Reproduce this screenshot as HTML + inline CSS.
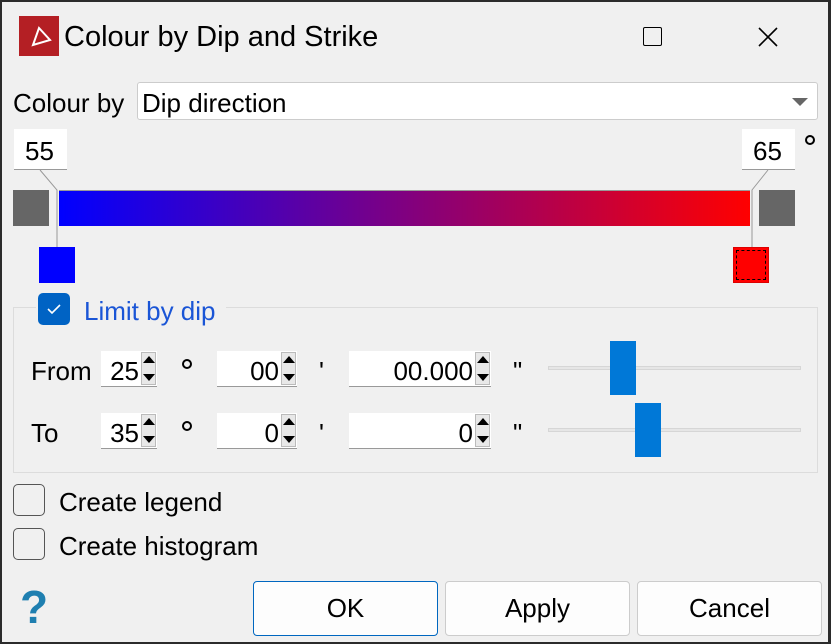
<!DOCTYPE html>
<html><head><meta charset="utf-8"><style>
*{box-sizing:border-box;margin:0;padding:0}
body{width:831px;height:644px;overflow:hidden;background:#2b2b2b;font-family:"Liberation Sans",sans-serif;color:#000}
#w{position:absolute;left:2px;top:2px;width:826px;height:640px;background:#f0f0f0}
.a{position:absolute}
.t{position:absolute;font-size:26px;line-height:1;white-space:nowrap}
.box{position:absolute;background:#fff}
.spin{position:absolute;background:#fff;border-bottom:1px solid #999;height:36px}
.spin .v{position:absolute;right:18px;top:5px;font-size:26px}
.spin .ar{position:absolute;right:1px;top:1px;width:15px;height:33px;background:#e8e8e8;border:1px solid #bbb}
.spin .ar:before{content:"";position:absolute;left:1px;top:3px;border:6px solid transparent;border-bottom:7px solid #000;border-top:0}
.spin .ar:after{content:"";position:absolute;left:1px;bottom:3px;border:6px solid transparent;border-top:7px solid #000;border-bottom:0}
.btn{position:absolute;top:579px;height:55px;width:185px;background:#fdfdfd;border:1px solid #ccc;border-radius:4px;font-size:26px;text-align:center;line-height:53px}
.cb{position:absolute;width:32px;height:32px;border:1.5px solid #555;border-radius:5px;background:#f0f0f0}
.deg{position:absolute;width:10px;height:10px;border:2px solid #000;border-radius:50%}
</style></head><body><div id="w">
<div class="a" style="left:17px;top:14px;width:40px;height:40px;background:#b41f24"></div>
<svg class="a" style="left:17px;top:14px" width="40" height="40"><path d="M14 29 L20 12 L31 24 Z" fill="none" stroke="#fff" stroke-width="2"/></svg>
<div class="t" style="left:62px;top:21px;font-size:29px">Colour by Dip and Strike</div>
<div class="a" style="left:641px;top:25px;width:19px;height:19px;border:1.5px solid #000;border-radius:2px"></div>
<svg class="a" style="left:756px;top:25px" width="20" height="20"><path d="M1 1L19 19M19 1L1 19" stroke="#000" stroke-width="1.6"/></svg>

<div class="t" style="left:11px;top:88px">Colour by</div>
<div class="box" style="left:135px;top:80px;width:681px;height:38px;border:1px solid #ccc;border-radius:3px"></div>
<div class="t" style="left:140px;top:88px">Dip direction</div>
<div class="a" style="left:790px;top:96px;border:8px solid transparent;border-top:8px solid #666;border-bottom:0"></div>

<div class="box" style="left:12px;top:127px;width:53px;height:41px;border-bottom:1px solid #999"></div>
<div class="t" style="left:23px;top:136px">55</div>
<div class="box" style="left:740px;top:127px;width:53px;height:41px;border-bottom:1px solid #999"></div>
<div class="t" style="left:751px;top:136px">65</div>
<div class="deg" style="left:803px;top:133px"></div>

<div class="a" style="left:11px;top:188px;width:36px;height:36px;background:#666"></div>
<div class="a" style="left:757px;top:188px;width:36px;height:36px;background:#666"></div>
<div class="a" style="left:57px;top:188px;width:691px;height:36px;background:linear-gradient(90deg,#0000ff,#800080 50%,#ff0000);border-top:1px solid #999"></div>
<svg class="a" style="left:0;top:0" width="826" height="260"><path d="M38 168 L55 188 L55 245 M766 168 L750 188 L750 245" fill="none" stroke="#999" stroke-width="1"/></svg>
<div class="a" style="left:37px;top:245px;width:36px;height:36px;background:#0000ff"></div>
<div class="a" style="left:731px;top:245px;width:36px;height:36px;background:#ff0000;border:1px solid #d00;outline:1px dashed #000;outline-offset:-4px"></div>

<div class="a" style="left:11px;top:305px;width:805px;height:166px;border:1px solid #dcdcdc"></div>
<div class="a" style="left:34px;top:293px;width:190px;height:30px;background:#f0f0f0"></div>
<div class="a" style="left:36px;top:291px;width:32px;height:32px;background:#0063c4;border-radius:5px"></div>
<svg class="a" style="left:36px;top:291px" width="32" height="32"><path d="M10 16 L14 20 L22 12" fill="none" stroke="#fff" stroke-width="1.6"/></svg>
<div class="t" style="left:82px;top:296px;color:#1a55d6">Limit by dip</div>

<div class="t" style="left:29px;top:356px">From</div>
<div class="spin" style="left:99px;top:349px;width:56px"><span class="v">25</span><span class="ar"></span></div>
<div class="deg" style="left:180px;top:357px"></div>
<div class="spin" style="left:215px;top:349px;width:80px"><span class="v">00</span><span class="ar"></span></div>
<div class="t" style="left:317px;top:356px">'</div>
<div class="spin" style="left:347px;top:349px;width:142px"><span class="v">00.000</span><span class="ar"></span></div>
<div class="t" style="left:511px;top:356px">"</div>
<div class="a" style="left:546px;top:364px;width:253px;height:4px;background:#e6e6e6;border:1px solid #d6d6d6"></div>
<div class="a" style="left:608px;top:339px;width:26px;height:54px;background:#0078d7"></div>

<div class="t" style="left:29px;top:418px">To</div>
<div class="spin" style="left:99px;top:411px;width:56px"><span class="v">35</span><span class="ar"></span></div>
<div class="deg" style="left:180px;top:419px"></div>
<div class="spin" style="left:215px;top:411px;width:80px"><span class="v">0</span><span class="ar"></span></div>
<div class="t" style="left:317px;top:418px">'</div>
<div class="spin" style="left:347px;top:411px;width:142px"><span class="v">0</span><span class="ar"></span></div>
<div class="t" style="left:511px;top:418px">"</div>
<div class="a" style="left:546px;top:426px;width:253px;height:4px;background:#e6e6e6;border:1px solid #d6d6d6"></div>
<div class="a" style="left:633px;top:401px;width:26px;height:54px;background:#0078d7"></div>

<div class="cb" style="left:11px;top:482px"></div>
<div class="t" style="left:57px;top:487px">Create legend</div>
<div class="cb" style="left:11px;top:526px"></div>
<div class="t" style="left:57px;top:531px">Create histogram</div>

<div class="t" style="left:18px;top:582px;font-size:46px;font-weight:bold;color:#1f7fb0">?</div>
<div class="btn" style="left:251px;border-color:#0067c0">OK</div>
<div class="btn" style="left:443px">Apply</div>
<div class="btn" style="left:635px">Cancel</div>
</div></body></html>
